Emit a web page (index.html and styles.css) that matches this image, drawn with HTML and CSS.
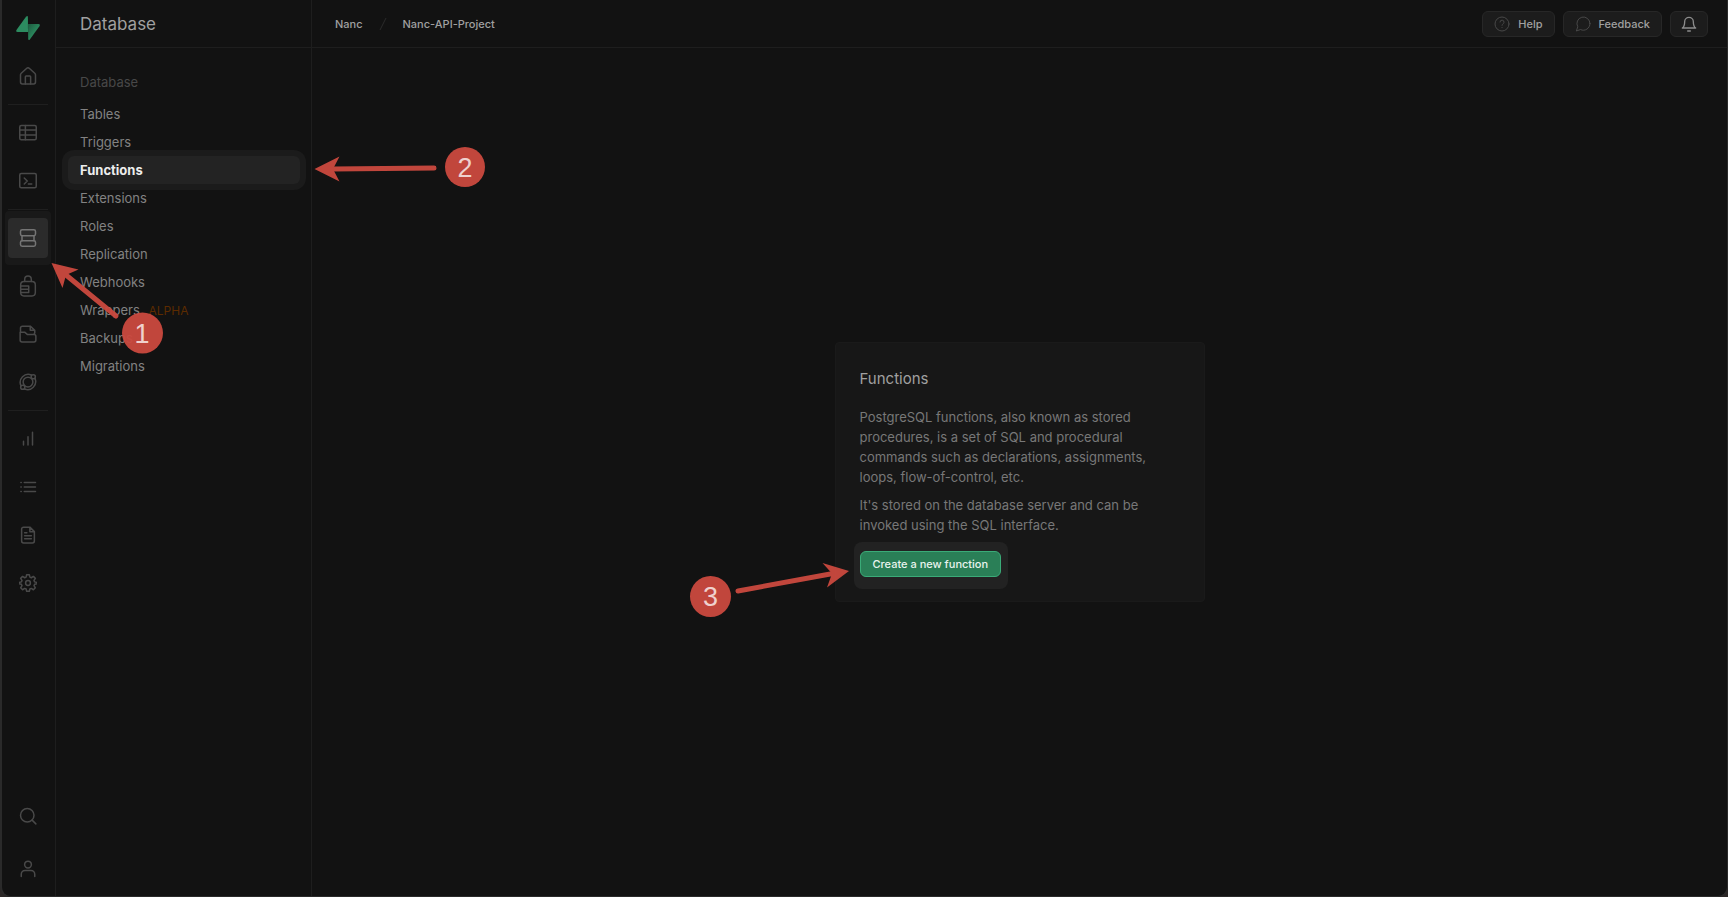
FILE: index.html
```html
<!DOCTYPE html>
<html lang="en">
<head>
<meta charset="utf-8">
<title>Database Functions</title>
<link rel="stylesheet" href="styles.css">
</head>
<body>
<div class="window">
  <nav class="rail" aria-label="Products">
    <a class="logo" href="#" aria-label="Home">
      <svg width="24" height="26" viewBox="0 0 24 26">
        <defs><linearGradient id="bolt" x1="0" y1="0" x2="1" y2="1"><stop offset="0" stop-color="#1d5a3f"/><stop offset=".6" stop-color="#2b8a5e"/></linearGradient></defs>
        <path d="M12 9H22.500Q24.600 9.200 23.400 11.300L14 24.200Q12.500 26 12.200 24Z" fill="url(#bolt)"/>
        <path d="M12 17H1.500Q-.6 16.700.6 14.700L10 1.800Q11.700 0 11.900 2Z" fill="#2c8c60"/>
      </svg>
    </a>
    <a class="rail-item" href="#" aria-label="Project home"><svg class="icon" viewBox="0 0 24 24"><path d="M2 10.500a3 3 0 0 1 1-2.200l7-6.300a3 3 0 0 1 4 0l7 6.300a3 3 0 0 1 1 2.200V20a2.500 2.500 0 0 1-2.500 2.500h-15A2.500 2.500 0 0 1 2 20z"/><path d="M8.500 22.500V13a1 1 0 0 1 1-1h5a1 1 0 0 1 1 1v9.500"/></svg></a>
    <hr class="rail-rule">
    <a class="rail-item" href="#" aria-label="Table editor"><svg class="icon" viewBox="0 0 24 24"><rect x="1" y="2" width="22" height="19" rx="2"/><path d="M1 8h22M1 14.500h22M8.500 2v19"/></svg></a>
    <a class="rail-item" href="#" aria-label="SQL editor"><svg class="icon" viewBox="0 0 24 24"><rect x="1" y="2" width="22" height="19" rx="2"/><path d="m7 8 4 4-4 4M12.500 16H17"/></svg></a>
    <hr class="rail-rule">
    <a class="rail-item rail-item-active" href="#" aria-label="Database"><svg class="icon" viewBox="0 0 24 24"><rect x="2" y="1" width="20" height="8" rx="2.200"/><rect x="2" y="15.500" width="20" height="7.500" rx="2.200"/><path d="M4 9v6.500M20 9v6.500"/></svg></a>
    <a class="rail-item" href="#" aria-label="Authentication"><svg class="icon icon-tall" viewBox="0 0 24 30"><rect x="2" y="9" width="20" height="19.500" rx="4.500"/><path d="M7.500 9V6a4.500 4.500 0 0 1 9 0v3M2 15h11v9H2M2 19.500h11"/></svg></a>
    <a class="rail-item" href="#" aria-label="Storage"><svg class="icon" viewBox="0 0 24 24"><path d="M2 10V4a2.500 2.500 0 0 1 2.500-2.500H15L21 7v3.500l-1 2M15 1.500V7h6M1.500 9.500h6l3.500 3h9a2.500 2.500 0 0 1 2.500 2.500v5a2.500 2.500 0 0 1-2.500 2.500H4A2.500 2.500 0 0 1 1.500 20z"/></svg></a>
    <a class="rail-item" href="#" aria-label="Edge functions"><svg class="icon" viewBox="0 0 24 24"><circle cx="12" cy="12" r="6.500"/><circle cx="19" cy="5" r="2.800"/><circle cx="5" cy="19" r="2.800"/><path d="M16.500 2.600A10.800 10.800 0 0 0 2.600 17M7.500 21.400A10.800 10.800 0 0 0 21.400 7.300"/></svg></a>
    <hr class="rail-rule">
    <a class="rail-item" href="#" aria-label="Reports"><svg class="icon" viewBox="0 0 24 24"><path d="M6 20v-5M12 20V9M18 20V3"/></svg></a>
    <a class="rail-item" href="#" aria-label="Logs"><svg class="icon" viewBox="0 0 24 24"><path d="M7 6h15M7 12h15M7 18h15M2.500 6h.5M2.500 12h.5M2.500 18h.5"/></svg></a>
    <a class="rail-item" href="#" aria-label="API docs"><svg class="icon" viewBox="0 0 24 24"><path d="M14.500 1.500H6a2.500 2.500 0 0 0-2.500 2.500v16A2.500 2.500 0 0 0 6 22.500h12a2.500 2.500 0 0 0 2.500-2.500V7.500zM14.500 1.500v6h6M7.500 9h3M7.500 13h9M7.500 17h9"/></svg></a>
    <a class="rail-item" href="#" aria-label="Settings"><svg class="icon" viewBox="0 0 24 24"><circle cx="12" cy="12" r="3.200"/><path d="M10.200 1h3.600l.7 3.200 1.900.8 2.800-1.800 2.600 2.600L20 8.600l.8 1.900 3.200.7v1.800l-3.200.7-.8 1.900 1.800 2.800-2.600 2.600-2.800-1.800-1.900.8-.7 3h-3.600l-.7-3-1.900-.8L4.800 21l-2.600-2.600L4 15.600l-.8-1.900-3-.7v-1.800l3-.7L4 8.600 2.200 5.800l2.600-2.600L7.600 5l1.900-.8z"/></svg></a>
    <div class="rail-foot">
      <button class="rail-item" type="button" aria-label="Search"><svg class="icon" viewBox="0 0 24 24"><circle cx="11" cy="11" r="9"/><path d="m17.500 17.500 5 5"/></svg></button>
      <button class="rail-item" type="button" aria-label="Account"><svg class="icon" viewBox="0 0 24 24"><circle cx="12" cy="6" r="4.500"/><path d="M3 22v-3a5 5 0 0 1 5-5h8a5 5 0 0 1 5 5v3"/></svg></button>
    </div>
  </nav>

  <aside class="sidebar">
    <h1 class="sidebar-title">Database</h1>
    <nav class="menu" aria-label="Database">
      <h2 class="menu-label">Database</h2>
      <a class="menu-item" href="#">Tables</a>
      <a class="menu-item" href="#">Triggers</a>
      <a class="menu-item menu-item-active" href="#" aria-current="page">Functions</a>
      <a class="menu-item" href="#">Extensions</a>
      <a class="menu-item" href="#">Roles</a>
      <a class="menu-item" href="#">Replication</a>
      <a class="menu-item" href="#">Webhooks</a>
      <a class="menu-item" href="#">Wrappers <span class="tag">ALPHA</span></a>
      <a class="menu-item" href="#">Backups</a>
      <a class="menu-item" href="#">Migrations</a>
    </nav>
  </aside>

  <div class="content">
    <header class="topbar">
      <nav class="crumbs" aria-label="Breadcrumb">
        <a href="#">Nanc</a>
        <svg class="slash" width="8" height="14" viewBox="0 0 8 14"><path d="M1 13 7 1"/></svg>
        <a href="#">Nanc-API-Project</a>
      </nav>
      <div class="actions">
        <button class="action" type="button"><svg class="action-icon" viewBox="0 0 24 24"><circle cx="12" cy="12" r="10.500"/><path d="M9 9a3 3 0 0 1 6 .5c0 2-3 2.500-3 4.500M12 17.200v.3"/></svg>Help</button>
        <button class="action" type="button"><svg class="action-icon" viewBox="0 0 24 24"><path d="M22.500 11.500a9.800 9.800 0 0 1-14.200 8.800L2 22.500l2.200-6.300A9.800 9.800 0 1 1 22.500 11.500z"/></svg>Feedback</button>
        <button class="action action-bell" type="button" aria-label="Notifications"><svg class="action-icon" viewBox="0 0 24 24"><path d="M18.500 8.500a6.500 6.500 0 0 0-13 0c0 7-3.500 9.500-3.500 9.500h20s-3.500-2.500-3.500-9.500M10 22.500h4"/></svg></button>
      </div>
    </header>
    <main class="stage">
      <section class="card">
        <h2 class="card-title">Functions</h2>
        <div class="card-text">
          <p>PostgreSQL functions, also known as stored procedures, is a set of SQL and procedural commands such as declarations, assignments, loops, flow-of-control, etc.</p>
          <p>It's stored on the database server and can be invoked using the SQL interface.</p>
        </div>
        <button class="primary" type="button">Create a new function</button>
        <svg class="note note-create" width="165" height="60" viewBox="688 558 165 60">
          <path class="shaft" d="M738 591 833 573.500"/><path class="head" d="M849 571 822.500 563 832 573.500 827 587.500Z"/>
          <circle cx="710.500" cy="596.500" r="20.500"/><text x="710.500" y="606">3</text>
        </svg>
      </section>
    </main>
  </div>

  <svg class="note note-database" width="116" height="96" viewBox="50 260 116 96">
    <path class="shaft" d="M116 316 66 275"/><path class="head" d="M51.500 263 78.500 269.500 66 275 62.500 288Z"/>
    <circle cx="142.500" cy="333" r="20.500"/><text x="142" y="343">1</text>
  </svg>
  <svg class="note note-functions" width="176" height="44" viewBox="312 145 176 44">
    <path class="shaft" d="M434 168 333 169"/><path class="head" d="M314.500 169 339.500 156.500 333 169 339.500 181.500Z"/>
    <circle cx="465" cy="167" r="20"/><text x="465" y="177">2</text>
  </svg>
</div>
</body>
</html>
```
FILE: styles.css
```css
* { box-sizing: border-box; }

body {
  margin: 0;
  background: #2b2726;
  color: #a0a0a0;
  font: 13px/20px Inter, "Liberation Sans", sans-serif;
}

h1, h2, p { margin: 0; font-weight: 400; }
a { color: inherit; text-decoration: none; }
button { padding: 0; border: 0; background: none; color: inherit; font: inherit; cursor: pointer; }
svg { display: block; }

.window {
  position: relative;
  display: flex;
  min-height: 100vh;
  overflow: hidden;
  background: #121212;
  border: solid #2a2a2a;
  border-width: 0 1px 1px 2px;
  border-radius: 0 0 10px 10px;
}

/* Icon rail */
.rail {
  position: relative;
  z-index: 0;
  display: flex;
  flex-direction: column;
  align-items: center;
  gap: 8px;
  width: 54px;
  padding: 15px 1px 7px 0;
  border-right: 1px solid #1e1e1e;
}
.logo { margin-bottom: 7px; }
.rail-item {
  display: grid;
  place-items: center;
  width: 40px;
  height: 40px;
  border-radius: 4px;
  color: #494949;
}
.rail-item-active {
  position: relative;
  background: #2b2b2b;
  color: #747474;
}
.rail-item-active::before {
  content: "";
  position: absolute;
  inset: -7px -3px;
  z-index: -1;
  border-radius: 4px;
  background: #191919;
}
.rail-rule { width: 40px; height: 1px; margin: 0; border: 0; background: #1f1f1f; }
.rail-foot { display: grid; gap: 13px; margin-top: auto; }
.icon {
  width: 18px;
  height: 18px;
  fill: none;
  stroke: currentColor;
  stroke-width: 2;
  stroke-linecap: round;
  stroke-linejoin: round;
}
.icon-tall { height: 22px; }

/* Sidebar */
.sidebar { width: 256px; border-right: 1px solid #1e1e1e; }
.sidebar-title {
  height: 48px;
  padding: 0 24px;
  border-bottom: 1px solid #1e1e1e;
  font-size: 17px;
  line-height: 48px;
}
.menu { position: relative; z-index: 0; display: grid; padding: 20px 11px 20px 12px; }
.menu-label { padding: 4px 12px; margin-bottom: 4px; color: #484848; font-size: 13px; }
.menu-item { padding: 4px 12px; color: #828282; }
.menu-item-active {
  position: relative;
  z-index: -1;
  border-radius: 6px;
  background: #232323;
  box-shadow: 0 0 0 6px #1b1b1b;
  color: #ededed;
  font-weight: 700;
}
.tag { margin-left: 5px; color: #5c2b00; font-size: 12px; line-height: 1; }

/* Top bar */
.content { flex: 1; display: flex; flex-direction: column; min-width: 0; }
.topbar {
  display: flex;
  align-items: center;
  justify-content: space-between;
  height: 48px;
  padding: 0 19px 0 23px;
  border-bottom: 1px solid #1e1e1e;
  font-size: 11px;
  font-weight: 500;
}
.crumbs { display: flex; align-items: center; gap: 16px; }
.slash { fill: none; stroke: #2b2b2b; }
.actions { display: flex; gap: 8px; }
.action {
  display: flex;
  align-items: center;
  gap: 8px;
  height: 26px;
  padding: 0 11px;
  border: 1px solid #272727;
  border-radius: 6px;
  background: #1c1c1c;
}
.action-icon {
  width: 16px;
  height: 16px;
  fill: none;
  stroke: #484848;
  stroke-width: 1.5;
  stroke-linecap: round;
  stroke-linejoin: round;
}
.action-bell { padding: 0 10px; }
.action-bell .action-icon { stroke: #8c8c8c; stroke-width: 2; }

/* Empty state */
.stage { flex: 1; display: grid; place-items: center; }
.card {
  position: relative;
  z-index: 0;
  display: flex;
  flex-direction: column;
  align-items: flex-start;
  gap: 16px;
  width: 370px;
  padding: 24px;
  border: 1px solid #1a1a1a;
  border-radius: 4px;
  background: #171717;
}
.card-title { font-size: 15px; line-height: 24px; }
.card-text { display: grid; gap: 8px; color: #787878; }
.primary {
  position: relative;
  height: 26px;
  padding: 0 12px;
  border: 1px solid #3aab78;
  border-radius: 6px;
  background: #2a7f57;
  color: #e8f3ed;
  font-size: 11px;
  font-weight: 500;
}
.primary::before {
  content: "";
  position: absolute;
  inset: -10px -8px -13px -7px;
  z-index: -1;
  border-radius: 8px;
  background: #222;
}

/* Numbered callouts */
.note { position: absolute; z-index: 1; overflow: visible; opacity: 0.95; pointer-events: none; fill: #cb493f; }
.note .shaft { fill: none; stroke: #cb493f; stroke-width: 5; stroke-linecap: round; }
.note text {
  fill: #fbdcd9;
  font: 27px "Liberation Sans", sans-serif;
  text-anchor: middle;
}
.note-database { left: 48px; top: 260px; }
.note-functions { left: 310px; top: 145px; }
.note-create { left: -148px; top: 215px; }
```
